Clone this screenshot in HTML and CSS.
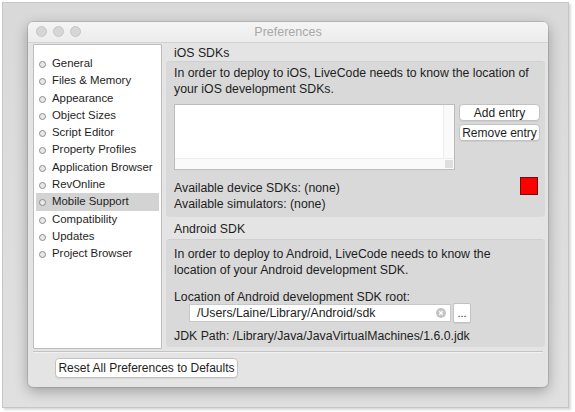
FILE: index.html
```html
<!DOCTYPE html>
<html lang="en">

<head>
    <meta charset="UTF-8">
    <title>Preferences</title>
    <link rel="stylesheet" href="styles.css">
</head>

<body>
    <div class="frame">
        <div class="window">
            <div class="titlebar">
                <div class="lights">
                    <span class="light"></span>
                    <span class="light"></span>
                    <span class="light"></span>
                </div>
                <div class="title">Preferences</div>
            </div>

            <div class="main">
                <ul class="sidebar">
                    <li>General</li>
                    <li>Files &amp; Memory</li>
                    <li>Appearance</li>
                    <li>Object Sizes</li>
                    <li>Script Editor</li>
                    <li>Property Profiles</li>
                    <li>Application Browser</li>
                    <li>RevOnline</li>
                    <li class="selected">Mobile Support</li>
                    <li>Compatibility</li>
                    <li>Updates</li>
                    <li>Project Browser</li>
                </ul>

                <div class="panel">
                    <div class="section-title first">iOS SDKs</div>
                    <div class="group ios">
                        <p class="desc">In order to deploy to iOS, LiveCode needs to know the location of<br>your iOS development SDKs.</p>
                        <div class="list-row">
                            <div class="listbox">
                                <div class="vscroll"></div>
                                <div class="hscroll"></div>
                                <div class="corner"></div>
                            </div>
                            <div class="list-buttons">
                                <button class="btn">Add entry</button>
                                <button class="btn">Remove entry</button>
                            </div>
                        </div>
                        <div class="status-row">
                            <div class="status-text">
                                <div>Available device SDKs: (none)</div>
                                <div>Available simulators: (none)</div>
                            </div>
                            <div class="status-box"></div>
                        </div>
                    </div>

                    <div class="section-title">Android SDK</div>
                    <div class="group android">
                        <p class="desc">In order to deploy to Android, LiveCode needs to know the<br>location of your Android development SDK.</p>
                        <div class="field-label">Location of Android development SDK root:</div>
                        <div class="field-row">
                            <div class="path-input">
                                <span>/Users/Laine/Library/Android/sdk</span>
                                <svg class="clear" width="10" height="10" viewBox="0 0 10 10">
                                    <circle cx="5" cy="5" r="5" fill="#c4c4c4"/>
                                    <path d="M3.2 3.2 L6.8 6.8 M6.8 3.2 L3.2 6.8" stroke="#fff" stroke-width="1.3"/>
                                </svg>
                            </div>
                            <button class="btn browse">...</button>
                        </div>
                        <div class="jdk">JDK Path: /Library/Java/JavaVirtualMachines/1.6.0.jdk</div>
                    </div>
                </div>
            </div>

            <div class="footer">
                <button class="btn reset">Reset All Preferences to Defaults</button>
            </div>
        </div>
    </div>
</body>

</html>
```

FILE: styles.css
```css
body {
    margin: 0;
    width: 575px;
    height: 412px;
    background-color: #fff;
    font-family: "Liberation Sans", Arial, sans-serif;
    font-size: 12.3px;
    color: #1e1e1e;
    overflow: hidden;
}

.frame {
    margin: 2px 0 0 2px;
    width: 540px;
    height: 385px;
    padding: 19px 0 0 25px;
    background: linear-gradient(#d9d9d9, #e0e0e0);
    border: 1px solid #c6c6c6;
    box-shadow: 2px 2px 2px rgba(0, 0, 0, 0.15);
}

.window {
    width: 520px;
    height: 365px;
    background-color: #e4e4e4;
    border-radius: 5px;
    box-shadow: 0 4px 14px rgba(0, 0, 0, 0.3), 0 0 0 1px rgba(0, 0, 0, 0.1);
    display: flex;
    flex-direction: column;
    overflow: hidden;
}

.titlebar {
    height: 20px;
    flex: none;
    background: linear-gradient(#f4f4f4, #ececec);
    border-bottom: 1px solid #d2d2d2;
    position: relative;
    display: flex;
    align-items: center;
    justify-content: center;
}

.lights {
    position: absolute;
    left: 8px;
    top: 4px;
    display: flex;
    gap: 6px;
}

.light {
    width: 11px;
    height: 11px;
    border-radius: 50%;
    background-color: #d6d6d6;
    border: 1px solid #c6c6c6;
    box-sizing: border-box;
}

.title {
    font-size: 12.5px;
    color: #a8a8a8;
}

.main {
    display: flex;
    padding: 1px 0 0 5px;
    height: 305px;
}

.sidebar {
    list-style: none;
    margin: 0;
    padding: 10px 0 0 2px;
    width: 125px;
    height: 293px;
    background-color: #fff;
    border: 1px solid #bdbdbd;
    border-radius: 1px;
    flex: none;
}

.sidebar li {
    height: 17.3px;
    line-height: 17.3px;
    padding-left: 16px;
    font-size: 11.4px;
    position: relative;
}

.sidebar li::before {
    content: "";
    position: absolute;
    left: 3px;
    top: 6px;
    width: 5px;
    height: 5px;
    border-radius: 50%;
    border: 1px solid #8c8c8c;
    background-color: #e8e8e8;
}

.sidebar li.selected {
    background-color: #d3d3d3;
    margin-right: 2px;
}

.panel {
    margin-left: 3px;
    width: 379px;
    padding: 0 1px;
    display: flex;
    flex-direction: column;
}

.section-title {
    height: 22px;
    line-height: 25px;
    padding-left: 8px;
}

.section-title.first {
    height: 17px;
    line-height: 18px;
}

.group {
    background-color: #d9d9d9;
    border-radius: 4px;
    border-top: 1px solid #d0d0d0;
    padding: 0 7px 0 8px;
}

.desc {
    margin: 0;
    line-height: 16px;
}

.ios {
    height: 152px;
    padding: 3px 5px 0 8px;
}

.list-row {
    display: flex;
    margin-top: 7px;
    gap: 4px;
}

.listbox {
    width: 279px;
    height: 64px;
    flex: none;
    background-color: #fff;
    border: 1px solid #bcbcbc;
    position: relative;
}

.vscroll {
    position: absolute;
    right: 0;
    top: 0;
    bottom: 0;
    width: 10px;
    border-left: 1px solid #ececec;
    background-color: #fafafa;
}

.hscroll {
    position: absolute;
    left: 0;
    right: 0;
    bottom: 0;
    height: 10px;
    border-top: 1px solid #ececec;
    background-color: #fafafa;
}

.corner {
    position: absolute;
    right: 1px;
    bottom: 1px;
    width: 8px;
    height: 8px;
    background-color: #dedede;
}

.list-buttons {
    display: flex;
    flex-direction: column;
    gap: 3px;
}

.btn {
    font-family: "Liberation Sans", Arial, sans-serif;
    font-size: 12px;
    color: #1e1e1e;
    background-color: #fff;
    border: 1px solid #c2c2c2;
    border-radius: 4px;
    padding: 0;
    box-shadow: 0 1px 0 rgba(0, 0, 0, 0.06);
}

.list-buttons .btn {
    width: 81px;
    height: 17px;
}

.status-row {
    display: flex;
    justify-content: space-between;
    margin-top: 10px;
}

.status-text {
    line-height: 16px;
}

.status-box {
    width: 18px;
    height: 18px;
    box-sizing: border-box;
    margin: -3px 2px 0 0;
    background-color: #ff0000;
    border: 1px solid #6a1010;
}

.android {
    height: 101px;
    padding-top: 6px;
}

.field-label {
    margin-top: 12px;
    line-height: 14px;
}

.field-row {
    display: flex;
    align-items: center;
    gap: 2px;
    margin: -1px 0 0 15px;
}

.path-input {
    height: 16px;
    background-color: #fff;
    border: 1px solid #c8c8c8;
    display: flex;
    align-items: center;
    justify-content: space-between;
    padding: 0 4px 0 7px;
    width: 249px;
}

.clear {
    flex: none;
}

.browse {
    width: 18px;
    height: 20px;
    border-radius: 2px;
    font-size: 11px;
    line-height: 14px;
}

.jdk {
    margin-top: 5px;
    line-height: 16px;
}

.footer {
    flex: 1;
    margin: 2px 5px 0;
    border-top: 1px solid #c4c4c4;
    box-shadow: inset 0 1px 0 #f2f2f2;
    padding: 6px 0 0 22px;
}

.reset {
    width: 183px;
    height: 20px;
}
```
